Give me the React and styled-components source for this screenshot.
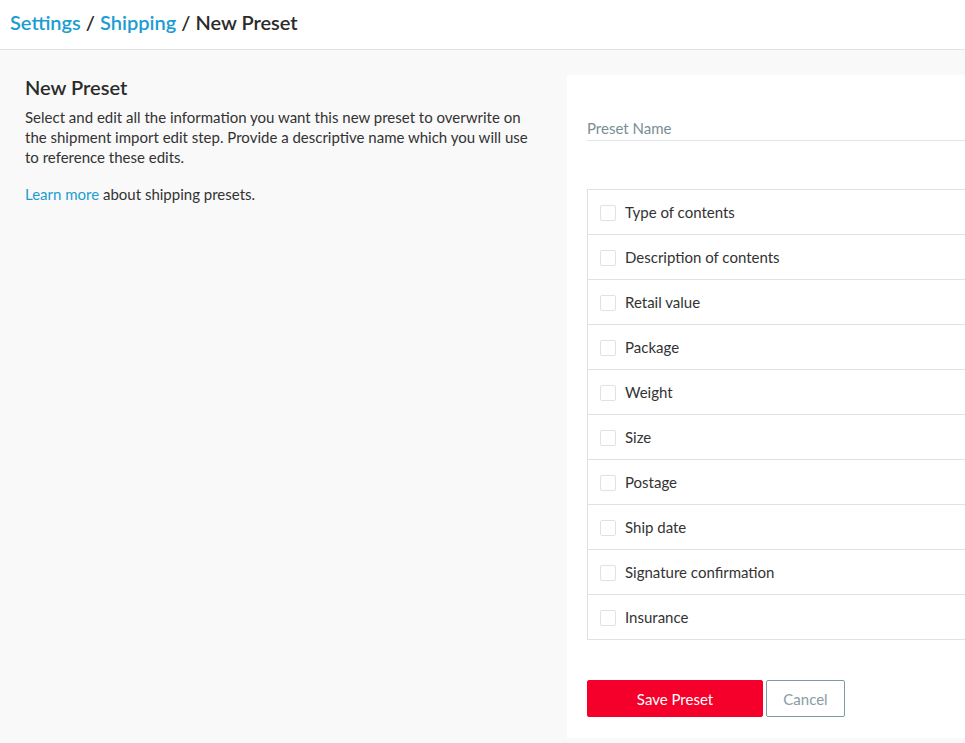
import React from "react";
import styled, { createGlobalStyle } from "styled-components";

const Global = createGlobalStyle`
  html, body { margin: 0; padding: 0; }
  body {
    font-family: Lato, "Open Sans", sans-serif;
    background: #f9f9f9;
    color: #2b2b2b;
    overflow: hidden;
    width: 965px;
    height: 743px;
  }
`;

const Header = styled.header`
  height: 50px;
  box-sizing: border-box;
  background: #fff;
  border-bottom: 1px solid #e3e3e3;
  display: flex;
  align-items: center;
  padding: 0 10px 6px;
  font-size: 20px;
  font-weight: 600;
  color: #2b2b2b;
`;

const Crumb = styled.a`
  color: #1b9dd3;
  text-decoration: none;
`;

const Sep = styled.span`
  margin: 0 5px;
`;

const Main = styled.main`
  display: flex;
  align-items: flex-start;
  padding-top: 25px;
`;

const Intro = styled.section`
  flex: none;
  width: 517px;
  padding: 0 25px;
`;

const Title = styled.h1`
  margin: 0 0 8px;
  font-size: 20px;
  font-weight: 600;
  line-height: 24px;
  color: #2b2b2b;
`;

const Text = styled.p`
  margin: 0 0 ${(p) => p.$gap || 0}px;
  font-size: 15px;
  line-height: 20px;
  color: #333;
`;

const Link = styled.a`
  color: #1b9dd3;
  text-decoration: none;
`;

const Card = styled.section`
  flex: none;
  width: 440px;
  background: #fff;
  padding: 43px 0 21px 20px;
  box-sizing: border-box;
`;

const Field = styled.label`
  display: block;
  border-bottom: 1px solid #e1e5e8;
  padding-bottom: 2px;
  margin-bottom: 48px;
  font-size: 15px;
  line-height: 20px;
  color: #7b8d95;
`;

const List = styled.ul`
  list-style: none;
  margin: 0;
  padding: 0;
  border: 1px solid #dde2e6;
  border-right: none;
`;

const Row = styled.li`
  height: ${(p) => (p.$first ? 44 : 45)}px;
  box-sizing: border-box;
  display: flex;
  align-items: center;
  padding-left: 12px;
  font-size: 15px;
  color: #333;
  border-top: ${(p) => (p.$first ? "none" : "1px solid #dde2e6")};
`;

const Box = styled.span`
  width: 14px;
  height: 14px;
  border: 1px solid #dde2e6;
  border-radius: 2px;
  margin: 2px 9px 0 0;
  flex: none;
`;

const Actions = styled.div`
  display: flex;
  gap: 3px;
  margin-top: 40px;
`;

const Button = styled.button`
  height: 37px;
  box-sizing: border-box;
  font-family: inherit;
  font-size: 15px;
  border-radius: 2px;
  cursor: pointer;
  width: ${(p) => p.$w}px;
  background: ${(p) => (p.$primary ? "#f5002a" : "#fff")};
  color: ${(p) => (p.$primary ? "#fff" : "#8a9ba2")};
  border: 1px solid ${(p) => (p.$primary ? "#f5002a" : "#7f9aa2")};
`;

const items = [
  "Type of contents",
  "Description of contents",
  "Retail value",
  "Package",
  "Weight",
  "Size",
  "Postage",
  "Ship date",
  "Signature confirmation",
  "Insurance",
];

export default function App() {
  return (
    <>
      <Global />
      <Header>
        <Crumb>Settings</Crumb>
        <Sep>/</Sep>
        <Crumb>Shipping</Crumb>
        <Sep>/</Sep>
        <span>New Preset</span>
      </Header>
      <Main>
        <Intro>
          <Title>New Preset</Title>
          <Text $gap={17}>
            Select and edit all the information you want this new preset to
            overwrite on the shipment import edit step. Provide a descriptive
            name which you will use to reference these edits.
          </Text>
          <Text>
            <Link>Learn more</Link> about shipping presets.
          </Text>
        </Intro>
        <Card>
          <Field>Preset Name</Field>
          <List>
            {items.map((t, i) => (
              <Row key={t} $first={i === 0}>
                <Box />
                {t}
              </Row>
            ))}
          </List>
          <Actions>
            <Button $primary $w={176}>Save Preset</Button>
            <Button $w={79}>Cancel</Button>
          </Actions>
        </Card>
      </Main>
    </>
  );
}
